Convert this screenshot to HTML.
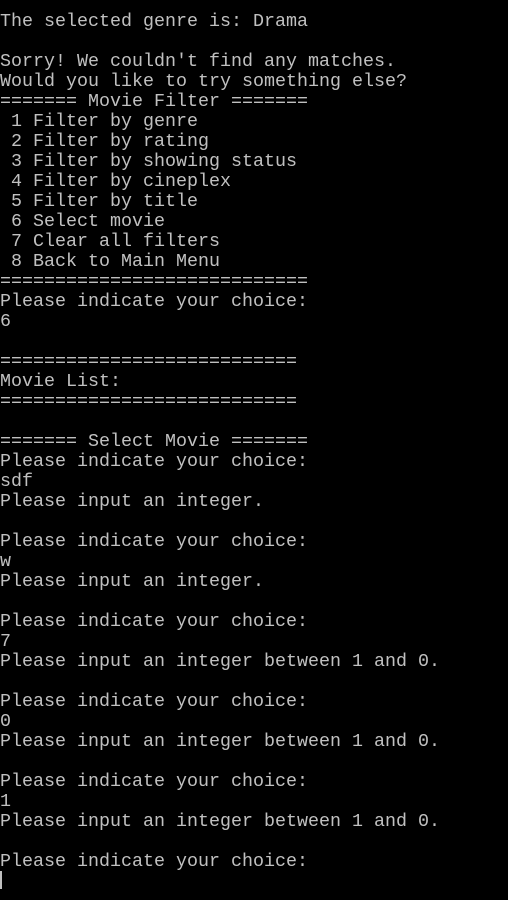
<!DOCTYPE html>
<html><head><meta charset="utf-8"><style>
html,body{margin:0;padding:0;background:#000;width:508px;height:900px;overflow:hidden}
pre{margin:0;padding:12px 0 0 0;font-family:"Liberation Mono",monospace;font-size:18.33px;line-height:20px;color:#c0c0c0;white-space:pre}
.cur{display:inline-block;width:2px;height:18px;background:#c0c0c0;vertical-align:top;margin-top:-1px}
</style></head><body><pre>The selected genre is: Drama

Sorry! We couldn't find any matches.
Would you like to try something else?
======= Movie Filter =======
 1 Filter by genre
 2 Filter by rating
 3 Filter by showing status
 4 Filter by cineplex
 5 Filter by title
 6 Select movie
 7 Clear all filters
 8 Back to Main Menu
============================
Please indicate your choice:
6

===========================
Movie List:
===========================

======= Select Movie =======
Please indicate your choice:
sdf
Please input an integer.

Please indicate your choice:
w
Please input an integer.

Please indicate your choice:
7
Please input an integer between 1 and 0.

Please indicate your choice:
0
Please input an integer between 1 and 0.

Please indicate your choice:
1
Please input an integer between 1 and 0.

Please indicate your choice:
<span class="cur"></span></pre></body></html>
